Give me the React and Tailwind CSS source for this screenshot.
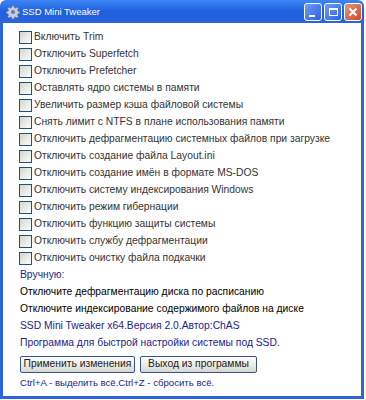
const options = [
  'Включить Trim',
  'Отключить Superfetch',
  'Отключить Prefetcher',
  'Оставлять ядро системы в памяти',
  'Увеличить размер кэша файловой системы',
  'Снять лимит с NTFS в плане использования памяти',
  'Отключить дефрагментацию системных файлов при загрузке',
  'Отключить создание файла Layout.ini',
  'Отключить создание имён в формате MS-DOS',
  'Отключить систему индексирования Windows',
  'Отключить режим гибернации',
  'Отключить функцию защиты системы',
  'Отключить службу дефрагментации',
  'Отключить очистку файла подкачки',
];

const GearIcon = () => (
  <svg width="14" height="14" viewBox="0 0 14 14">
    <g fill="#c9ced6" stroke="#6b7280" strokeWidth="0.6">
      <path d="M6 0.8h2l0.3 1.7 1.3 0.6 1.4-1 1.4 1.4-1 1.4 0.6 1.3 1.7 0.3v2l-1.7 0.3-0.6 1.3 1 1.4-1.4 1.4-1.4-1-1.3 0.6-0.3 1.7h-2l-0.3-1.7-1.3-0.6-1.4 1-1.4-1.4 1-1.4-0.6-1.3-1.7-0.3v-2l1.7-0.3 0.6-1.3-1-1.4 1.4-1.4 1.4 1 1.3-0.6z" />
    </g>
    <circle cx="7" cy="7" r="2" fill="#5b7fc7" />
  </svg>
);

const Checkbox = () => (
  <span className="w-[13px] h-[13px] shrink-0 border border-[#1c5180] bg-gradient-to-br from-[#d6d6d0] to-[#fbfbfa]" />
);

const TitleButton = ({ children, red }) => (
  <div
    className={`w-[18px] h-[18px] rounded-[3px] border border-white flex items-center justify-center ${
      red
        ? 'bg-gradient-to-br from-[#e7977a] to-[#c9462a]'
        : 'bg-gradient-to-br from-[#6f9cf5] to-[#2a62e0]'
    }`}
  >
    {children}
  </div>
);

const Line = ({ children, className = '' }) => (
  <div className={`h-[17px] flex items-center pl-[1px] whitespace-nowrap text-[10.3px] ${className}`}>{children}</div>
);

export default function App() {
  return (
    <div className="w-[366px] h-[400px] bg-white" style={{ fontFamily: '"Liberation Sans", Arial, sans-serif' }}>
      <div className="w-[364px] h-[399px] flex flex-col">
        {/* title bar */}
        <div className="h-[23px] shrink-0 rounded-t-[6px] bg-gradient-to-b from-[#3d86f5] via-[#1f5fe0] to-[#2a63dc] flex items-center pl-[6px] pr-[2px]">
          <GearIcon />
          <span className="ml-[2px] text-white text-[9.5px] leading-none">SSD Mini Tweaker</span>
          <div className="ml-auto flex gap-[2px]">
            <TitleButton>
              <span className="w-[6px] h-[2px] bg-white mt-[8px] -ml-[3px]" />
            </TitleButton>
            <TitleButton>
              <span className="w-[9px] h-[8px] border border-white border-t-2" />
            </TitleButton>
            <TitleButton red>
              <svg width="10" height="10" viewBox="0 0 10 10">
                <path d="M1.5 1.5l7 7M8.5 1.5l-7 7" stroke="white" strokeWidth="2" />
              </svg>
            </TitleButton>
          </div>
        </div>

        {/* body */}
        <div className="flex-1 border-x-[3px] border-b-[3px] border-[#2f64d8] bg-white pl-[16px] pt-[6px] leading-none">
          {options.map((o) => (
            <div key={o} className="h-[17px] flex items-center gap-[2px] whitespace-nowrap text-[10.3px] text-[#333]">
              <Checkbox />
              <span>{o}</span>
            </div>
          ))}
          <Line className="text-[#1c1c8c]">Вручную:</Line>
          <Line className="text-black">Отключите дефрагментацию диска по расписанию</Line>
          <Line className="text-black">Отключите индексирование содержимого файлов на диске</Line>
          <Line className="text-[#1c1c8c]">SSD Mini Tweaker x64.Версия 2.0.Автор:ChAS</Line>
          <Line className="text-[#1c1c8c]">Программа для быстрой настройки системы под SSD.</Line>
          <div className="flex gap-[5px] mt-[4px] pl-[1px]">
            <button className="w-[115px] h-[17px] rounded-[2px] border border-[#33558f] bg-gradient-to-b from-white to-[#d8d8d2] text-[10.3px] text-[#222] leading-none whitespace-nowrap">
              Применить изменения
            </button>
            <button className="w-[117px] h-[17px] rounded-[2px] border border-[#33558f] bg-gradient-to-b from-white to-[#d8d8d2] text-[10.3px] text-[#222] leading-none whitespace-nowrap">
              Выход из программы
            </button>
          </div>
          <div className="h-[17px] mt-[1px] flex items-center pl-[1px] whitespace-nowrap text-[9.6px] text-[#1c1c8c]">
            Ctrl+A - выделить всё.Ctrl+Z - сбросить всё.
          </div>
        </div>
      </div>
    </div>
  );
}
